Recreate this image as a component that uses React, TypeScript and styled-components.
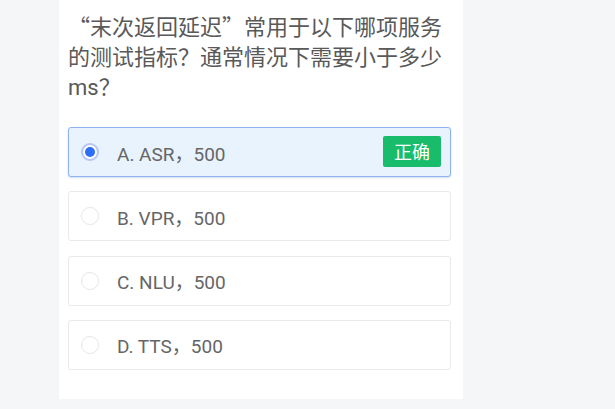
import React from 'react';
import styled, {createGlobalStyle} from 'styled-components';

const GlobalStyle = createGlobalStyle`
  html, body {
    margin: 0;
    padding: 0;
    background: #f5f6f8;
  }
  body {
    font-family: Roboto, "Noto Sans CJK SC", sans-serif;
  }
`;

const Page = styled.div`
  display: flex;
  padding-left: 59px;
  height: 409px;
  box-sizing: border-box;
`;

const Card = styled.div`
  width: 404px;
  height: 399px;
  box-sizing: border-box;
  background: #fff;
  padding: 13px 12px 28px 9px;
  display: flex;
  flex-direction: column;
`;

const Question = styled.div`
  font-size: 22px;
  line-height: 30px;
  color: #595959;
  margin-bottom: 24px;
`;

// full-width CJK quote marks
const Quote = styled.span`
  font-family: "Noto Sans CJK SC", sans-serif;
  line-height: 1;
`;

const Options = styled.div`
  display: flex;
  flex-direction: column;
  gap: 14.33px;
`;

const Option = styled.div<{$selected?: boolean}>`
  height: 50px;
  box-sizing: border-box;
  display: flex;
  align-items: center;
  padding: 0 9px 0 12px;
  border-radius: 3px;
  border: 1px solid ${p => (p.$selected ? '#8fb2f2' : '#e9e9e9')};
  background: ${p => (p.$selected ? '#e8f3fe' : '#fff')};
  box-shadow: ${p => (p.$selected ? '0 1px 2px rgba(80, 120, 200, 0.25)' : 'none')};
`;

const Radio = styled.span<{$checked?: boolean}>`
  width: 18px;
  height: 18px;
  box-sizing: border-box;
  border-radius: 50%;
  flex: none;
  background: #fff;
  border: ${p => (p.$checked ? '2px solid #b4c7f4' : '1px solid #e6e6e6')};
  display: flex;
  align-items: center;
  justify-content: center;

  &::after {
    content: '';
    display: ${p => (p.$checked ? 'block' : 'none')};
    width: 10px;
    height: 10px;
    border-radius: 50%;
    background: #2c6ef6;
  }
`;

const Label = styled.span`
  flex: 1;
  margin-left: 18px;
  font-size: 19px;
  color: #666;
`;

const Badge = styled.span`
  width: 58px;
  height: 31px;
  border-radius: 2px;
  background: #18bc6b;
  color: #fff;
  font-size: 18px;
  display: flex;
  align-items: center;
  justify-content: center;
  margin-top: -2px;
`;

const options = [
  {key: 'A', text: 'A. ASR，500', selected: true, correct: true},
  {key: 'B', text: 'B. VPR，500'},
  {key: 'C', text: 'C. NLU，500'},
  {key: 'D', text: 'D. TTS，500'}
];

const App = () => (
  <Page>
    <GlobalStyle />
    <Card>
      <Question>
        <Quote>“</Quote>末次返回延迟<Quote>”</Quote>常用于以下哪项服务的测试指标？通常情况下需要小于多少ms？
      </Question>
      <Options>
        {options.map(o => (
          <Option key={o.key} $selected={o.selected}>
            <Radio $checked={o.selected} />
            <Label>{o.text}</Label>
            {o.correct ? <Badge>正确</Badge> : null}
          </Option>
        ))}
      </Options>
    </Card>
  </Page>
);

export default App;
